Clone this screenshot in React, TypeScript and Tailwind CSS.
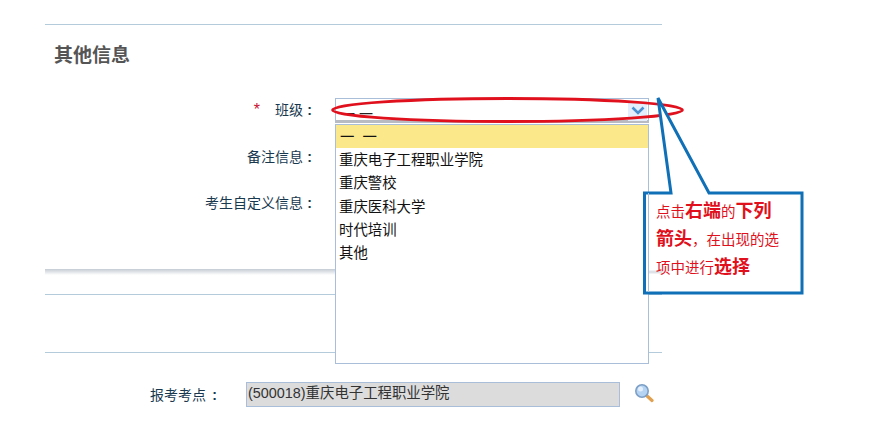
const font = { fontFamily: '"Liberation Sans","Noto Sans CJK SC",sans-serif' };

function Label({ children, star }: { children: React.ReactNode; star?: boolean }) {
  return (
    <div className={star ? "w-[267px] shrink-0 flex justify-end items-center text-[14px] leading-[20px] text-[#17384f] pb-[2px]" : "w-[267px] shrink-0 flex justify-end items-center text-[14px] leading-[20px] text-[#17384f]"}>
      {star && <span className="mr-[15px] text-[#c8102e] text-[16px]">*</span>}
      <span>{children}</span>
      <span className="w-[9px] text-right font-bold">:</span>
    </div>
  );
}

const options = ["重庆电子工程职业学院", "重庆警校", "重庆医科大学", "时代培训", "其他"];

export default function App() {
  return (
    <div className="relative w-[871px] h-[424px] bg-white overflow-hidden" style={font}>
      <div className="ml-[45px] w-[617px] pt-[24px]">
        <div className="h-px bg-[#b4cbdc]" />
        <h2 className="mt-[20px] ml-[9px] text-[19px] leading-[22px] font-bold text-[#555555]">其他信息</h2>

        <div className="mt-[31px] flex items-center h-[25px]">
          <Label star>班级</Label>
          <div className="ml-[23px] w-[314px] h-[25px] border border-[#a9bfd9] border-b-[3px] border-b-[#b8bcc2] bg-white flex items-center justify-between pl-[5px] pr-[1px]">
            <span className="text-[14px] leading-none text-[#222] mt-[8px] whitespace-pre">一 一</span>
            <span className="w-[19px] h-[20px] mt-[2px] bg-[#e3edfb] flex items-center justify-center">
              <svg width="14" height="9" viewBox="0 0 14 9"><path d="M1.5 1.5 7 7l5.500-5.500" fill="none" stroke="#4a90d0" strokeWidth="2.6" /></svg>
            </span>
          </div>
        </div>

        <div className="mt-[24px] flex"><Label>备注信息</Label></div>
        <div className="mt-[26px] flex"><Label>考生自定义信息</Label></div>

        <div className="mt-[56px] h-[6px] bg-gradient-to-b from-[#c5ccd4] to-[#ffffff]" />
        <div className="mt-[19px] h-px bg-[#b4cbdc]" />
        <div className="mt-[57px] h-px bg-[#b4cbdc]" />

        <div className="mt-[28px] flex items-center h-[26px]">
          <div className="w-[172px] shrink-0 flex justify-end text-[14px] leading-[20px] text-[#17384f] pt-[2px]">
            <span>报考考点</span>
            <span className="w-[11px] text-right font-bold">:</span>
          </div>
          <div className="ml-[29px] w-[374px] h-[25px] bg-[#dcdcdc] border border-[#a9bfd9] flex items-center text-[14.4px] text-[#333] pl-[1px]">
            (500018)重庆电子工程职业学院
          </div>
          <svg className="ml-[14px] mt-[-2px]" width="20" height="20" viewBox="0 0 20 20">
            <line x1="12" y1="12" x2="18" y2="17.5" stroke="#e0a050" strokeWidth="3.2" strokeLinecap="round" />
            <circle cx="8" cy="8" r="6.2" fill="#b5d3f3" stroke="#7d9fc6" strokeWidth="1.6" />
            <circle cx="6.5" cy="6" r="2.5" fill="#e4f0fc" />
          </svg>
        </div>
      </div>

      {/* open dropdown list */}
      <div className="absolute left-[335px] top-[124px] w-[314px] h-[240px] bg-white border border-[#a9bfd9] text-[14.4px] text-[#111]">
        <div className="h-[23px] bg-[#fbe88a] pl-[4px] leading-[24px] whitespace-pre">一  一</div>
        {options.map((o) => (
          <div key={o} className="h-[23.25px] pl-[3px] leading-[25px]">{o}</div>
        ))}
      </div>

      {/* annotation: ellipse and callout */}
      <svg className="absolute left-0 top-0" width="871" height="424" viewBox="0 0 871 424">
        <ellipse cx="507.5" cy="110" rx="175" ry="11.5" fill="none" stroke="#e0101c" strokeWidth="2.8" />
        <path d="M658 98 671 193H644.500V293H802V193H709Z" fill="#ffffff" stroke="#0f70b7" strokeWidth="3" strokeLinejoin="miter" />
        <line x1="648.500" y1="193" x2="648.500" y2="292" stroke="#a9bfd9" />
        <line x1="649" y1="272" x2="662" y2="272" stroke="#dfe3e8" strokeWidth="3" />
      </svg>
      <div className="absolute left-[656px] top-[198px] w-[135px] text-[14.5px] leading-[27px] text-[#e0101c]">
        点击<b className="text-[18px]">右端</b>的<b className="text-[18px]">下列</b>
        <br />
        <b className="text-[18px]">箭头</b>，在出现的选
        <br />
        项中进行<b className="text-[18px]">选择</b>
      </div>
    </div>
  );
}
